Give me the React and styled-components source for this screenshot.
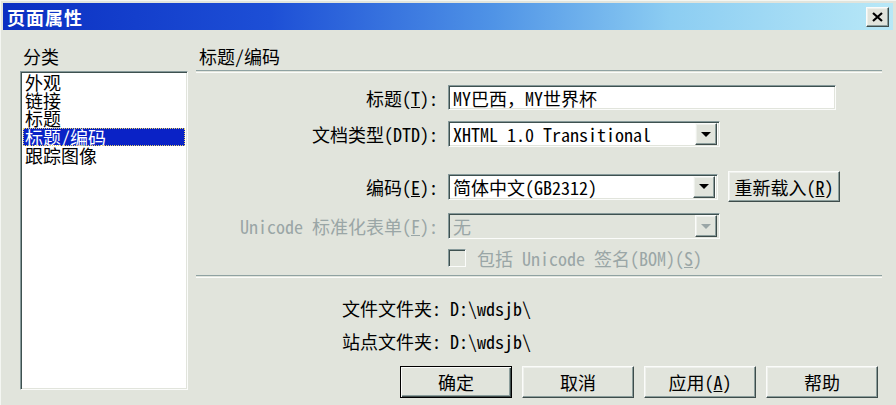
import React from "react";
import styled, { createGlobalStyle, css } from "styled-components";

// ^^^^^ classic "page properties" dialog ^^^^^

const GlobalStyle = createGlobalStyle`
  body {
    margin: 0;
    background: #e1e4dc;
    font-family: "Noto Sans Mono CJK SC", "Noto Sans CJK SC", sans-serif;
    font-size: 18px;
    color: #000;
  }
`;

const categories = ["外观", "链接", "标题", "标题/编码", "跟踪图像"];

const Key = ({ children }) => <u>{children}</u>;

const App = () => {
  return (
    <Dialog>
      <GlobalStyle />
      <TitleBar>
        <TitleText>页面属性</TitleText>
        <CloseButton>
          <svg width="11" height="10" viewBox="0 0 11 10">
            <path d="M1 1 L10 9 M10 1 L1 9" stroke="#000" strokeWidth="2.2" />
          </svg>
        </CloseButton>
      </TitleBar>

      <Body>
        <LeftPane>
          <PaneLabel>分类</PaneLabel>
          <ListBox>
            {categories.map((c) => (
              <ListItem key={c} selected={c === "标题/编码"}>
                {c}
              </ListItem>
            ))}
          </ListBox>
        </LeftPane>

        <RightPane>
          <PaneLabel>标题/编码</PaneLabel>
          <Separator />

          <Form>
            <Row $top={12}>
              <Label>
                标题(<Key>T</Key>):
              </Label>
              <TextInput $width={388}>MY巴西，MY世界杯</TextInput>
            </Row>

            <Row $top={11}>
              <Label>文档类型(DTD):</Label>
              <Select $width={272}>
                <span>XHTML 1.0 Transitional</span>
                <DropButton>
                  <Arrow />
                </DropButton>
              </Select>
            </Row>

            <Row $top={24}>
              <Label>
                编码(<Key>E</Key>):
              </Label>
              <Select $width={270}>
                <span>简体中文(GB2312)</span>
                <DropButton>
                  <Arrow />
                </DropButton>
              </Select>
              <Button $width={112} $height={31}>
                重新载入(<Key>R</Key>)
              </Button>
            </Row>

            <Row $top={11}>
              <Label disabled>
                Unicode 标准化表单(<Key>F</Key>):
              </Label>
              <Select $width={272} disabled>
                <span>无</span>
                <DropButton>
                  <Arrow disabled />
                </DropButton>
              </Select>
            </Row>

            <Row $top={10}>
              <Label />
              <CheckRow>
                <CheckBox />
                <span>
                  包括 Unicode 签名(BOM)(<Key>S</Key>)
                </span>
              </CheckRow>
            </Row>
          </Form>

          <Separator $top={8} />

          <InfoLine $top={21}>文件文件夹: D:\wdsjb\</InfoLine>
          <InfoLine $top={15}>站点文件夹: D:\wdsjb\</InfoLine>

          <ButtonBar>
            <Button $default>确定</Button>
            <Button>取消</Button>
            <Button>
              应用(<Key>A</Key>)
            </Button>
            <Button>帮助</Button>
          </ButtonBar>
        </RightPane>
      </Body>
    </Dialog>
  );
};

export default App;

/* ---------------------------- styled components --------------------------- */

const raised = css`
  background: #e1e4dc;
  border: 1px solid;
  border-color: #fbfcfa #3e4c4b #3e4c4b #fbfcfa;
  box-shadow: inset -1px -1px 0 #8c9e9c, inset 1px 1px 0 #eef0ec;
`;

const sunken = css`
  border: 1px solid;
  border-color: #86999a #fbfcfa #fbfcfa #86999a;
  box-shadow: inset 1px 1px 0 #3e5150, inset -1px -1px 0 #e1e4dc;
`;

const Dialog = styled.div`
  width: 896px;
  height: 405px;
  box-sizing: border-box;
  display: flex;
  flex-direction: column;
  background: #e1e4dc;
  border-top: 1px solid #f4f6f2;
  border-left: 1px solid #f4f6f2;
  overflow: hidden;
`;

const TitleBar = styled.div`
  height: 27px;
  margin: 2px 3px 0 2px;
  padding: 0 4px 0 4px;
  display: flex;
  align-items: center;
  justify-content: space-between;
  background: linear-gradient(
    90deg,
    #0b2fc2 0%,
    #1d4fd6 30%,
    #4f93e6 55%,
    #8ccdf2 75%,
    #b8e8f7 100%
  );
`;

const TitleText = styled.div`
  color: #fff;
  font-family: "Noto Sans CJK SC", sans-serif;
  font-weight: 700;
  font-size: 18px;
  line-height: 18px;
  letter-spacing: 1px;
`;

const CloseButton = styled.div`
  ${raised};
  width: 21px;
  height: 18px;
  display: flex;
  align-items: center;
  justify-content: center;
`;

const Body = styled.div`
  flex: 1;
  display: flex;
`;

const LeftPane = styled.div`
  width: 168px;
  margin-left: 19px;
  padding-top: 17px;
  display: flex;
  flex-direction: column;
`;

const PaneLabel = styled.div`
  line-height: 18px;
  height: 18px;
  padding-left: 3px;
`;

const ListBox = styled.div`
  ${sunken};
  margin-top: 6px;
  height: 319px;
  box-sizing: border-box;
  background: #fff;
  padding: 1px 2px;
`;

const ListItem = styled.div`
  height: 18px;
  line-height: 18px;
  padding-left: 2px;
  ${({ selected }) =>
    selected &&
    css`
      margin-top: 1px;
      background: #0a22c6;
      color: #fff;
      outline: 1px dotted #e8d36a;
      outline-offset: -1px;
    `}
`;

const RightPane = styled.div`
  flex: 1;
  margin-left: 8px;
  padding-top: 17px;
  display: flex;
  flex-direction: column;
`;

const Separator = styled.div`
  margin-top: ${({ $top }) => $top ?? 5}px;
  margin-right: 14px;
  height: 1px;
  border-top: 1px solid #8fa2a2;
  border-bottom: 1px solid #fbfcfa;
`;

const Form = styled.div`
  display: flex;
  flex-direction: column;
`;

const Row = styled.div`
  margin-top: ${({ $top }) => $top}px;
  display: grid;
  grid-template-columns: 242px auto auto 1fr;
  column-gap: 10px;
  align-items: center;
`;

const Label = styled.div`
  text-align: right;
  line-height: 18px;
  color: ${({ disabled }) => (disabled ? "#9aa6a6" : "#000")};
`;

const TextInput = styled.div`
  ${sunken};
  width: ${({ $width }) => $width}px;
  height: 25px;
  box-sizing: border-box;
  background: #fff;
  padding: 2px 4px;
  line-height: 20px;
  white-space: nowrap;
`;

const Select = styled.div`
  ${sunken};
  width: ${({ $width }) => $width}px;
  height: 26px;
  box-sizing: border-box;
  padding: 2px 2px 2px 4px;
  display: flex;
  align-items: center;
  justify-content: space-between;
  background: ${({ disabled }) => (disabled ? "#e1e4dc" : "#fff")};
  color: ${({ disabled }) => (disabled ? "#9aa6a6" : "#000")};
  line-height: 20px;
  white-space: nowrap;
`;

const DropButton = styled.div`
  ${raised};
  width: 22px;
  height: 22px;
  box-sizing: border-box;
  display: flex;
  align-items: center;
  justify-content: center;
`;

const Arrow = styled.div`
  width: 0;
  height: 0;
  border-left: 5px solid transparent;
  border-right: 5px solid transparent;
  border-top: 5px solid ${({ disabled }) => (disabled ? "#9aa6a6" : "#000")};
`;

const CheckRow = styled.div`
  display: flex;
  align-items: center;
  gap: 11px;
  color: #9aa6a6;
  line-height: 18px;
  white-space: nowrap;
`;

const CheckBox = styled.div`
  ${sunken};
  width: 18px;
  height: 18px;
  box-sizing: border-box;
  background: #e1e4dc;
`;

const InfoLine = styled.div`
  margin-top: ${({ $top }) => $top}px;
  padding-left: 146px;
  line-height: 18px;
  white-space: nowrap;
`;

const ButtonBar = styled.div`
  margin-top: 16px;
  padding-left: 204px;
  display: flex;
  gap: 10px;
`;

const Button = styled.div`
  ${raised};
  width: ${({ $width }) => $width ?? 112}px;
  height: ${({ $height }) => $height ?? 32}px;
  box-sizing: border-box;
  display: flex;
  align-items: center;
  justify-content: center;
  line-height: 18px;
  white-space: nowrap;
  ${({ $default }) =>
    $default &&
    css`
      border-color: #000;
      box-shadow: inset 1px 1px 0 #fbfcfa, inset -1px -1px 0 #3e4c4b,
        inset -2px -2px 0 #8c9e9c;
    `}
`;
